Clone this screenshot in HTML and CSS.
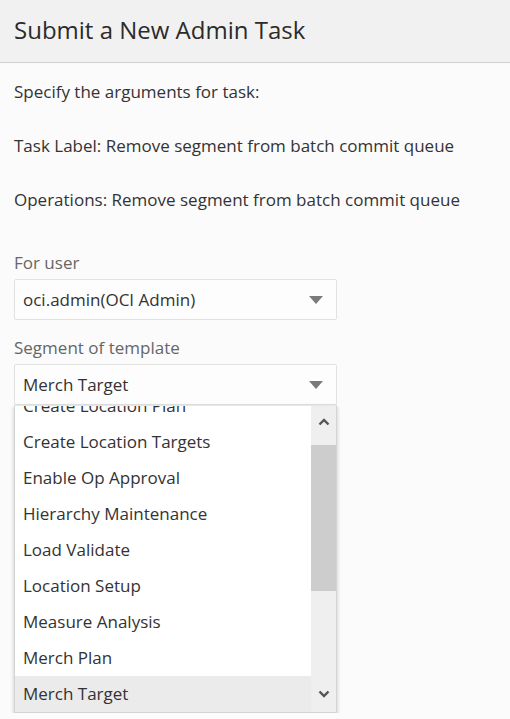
FILE: index.html
```html
<!DOCTYPE html>
<html lang="en">
<head>
<meta charset="utf-8">
<title>Submit a New Admin Task</title>
<link rel="stylesheet" href="styles.css">
</head>
<body>
<header class="page-header">
  <h1 class="title">Submit a New Admin Task</h1>
</header>
<main class="content">
  <p class="line">Specify the arguments for task:</p>
  <p class="line">Task Label: Remove segment from batch commit queue</p>
  <p class="line">Operations: Remove segment from batch commit queue</p>

  <div class="field">
    <label class="field-label">For user</label>
    <div class="select">
      <span class="select-value">oci.admin(OCI Admin)</span>
      <span class="caret"></span>
    </div>
  </div>

  <div class="field">
    <label class="field-label">Segment of template</label>
    <div class="select">
      <span class="select-value">Merch Target</span>
      <span class="caret"></span>
    </div>
    <div class="listbox">
      <ul class="options">
        <li class="option option-first">Create Location Plan</li>
        <li class="option">Create Location Targets</li>
        <li class="option">Enable Op Approval</li>
        <li class="option">Hierarchy Maintenance</li>
        <li class="option">Load Validate</li>
        <li class="option">Location Setup</li>
        <li class="option">Measure Analysis</li>
        <li class="option">Merch Plan</li>
        <li class="option option-selected">Merch Target</li>
      </ul>
      <div class="scrollbar">
        <div class="scroll-btn scroll-up">
          <svg width="12" height="8" viewBox="0 0 12 8"><polyline points="1.5,6.5 6,2 10.5,6.5" fill="none" stroke="#555" stroke-width="2.4"/></svg>
        </div>
        <div class="scroll-thumb"></div>
        <div class="scroll-track"></div>
        <div class="scroll-btn scroll-down">
          <svg width="12" height="8" viewBox="0 0 12 8"><polyline points="1.5,1.5 6,6 10.5,1.5" fill="none" stroke="#555" stroke-width="2.4"/></svg>
        </div>
      </div>
    </div>
  </div>
</main>
</body>
</html>
```
FILE: styles.css
```css
html, body {
  margin: 0;
  padding: 0;
}

body {
  background: #fbfbfb;
  color: #333333;
  font-family: "Open Sans", "Noto Sans", sans-serif;
  font-size: 17px;
}

.page-header {
  height: 62px;
  background: #f1f1f1;
  border-bottom: 1px solid #d0d0d0;
  display: flex;
  align-items: center;
  padding-left: 14px;
}

.title {
  margin: 0;
  font-size: 24px;
  font-weight: 400;
  color: #2b2b2b;
  line-height: 32px;
  padding-bottom: 2px;
}

.content {
  padding: 17px 14px 0 14px;
}

.line {
  margin: 0 0 30px 0;
  line-height: 24px;
}

.field {
  margin-top: 39px;
  width: 323px;
}

.field + .field {
  margin-top: 16px;
}

.field-label {
  display: block;
  color: #666666;
  line-height: 24px;
  margin-bottom: 4px;
}

.select {
  height: 41px;
  box-sizing: border-box;
  border: 1px solid #e2e2e2;
  border-radius: 2px;
  background: #fdfdfd;
  display: flex;
  align-items: center;
  justify-content: space-between;
  padding: 0 13px 0 8px;
}

.select-value {
  line-height: 24px;
}

.caret {
  width: 0;
  height: 0;
  border-left: 7px solid transparent;
  border-right: 7px solid transparent;
  border-top: 8px solid #7a7a7a;
}

/* open dropdown list under the second select */
.listbox {
  width: 323px;
  height: 308px;
  box-sizing: border-box;
  background: #ffffff;
  border: 1px solid #d4d4d4;
  border-top-color: #e6e6e6;
  box-shadow: 0 2px 4px rgba(0, 0, 0, 0.22);
  display: flex;
  overflow: hidden;
}

.options {
  list-style: none;
  margin: 0;
  padding: 0;
  flex: 1;
  overflow: hidden;
}

.option {
  height: 36px;
  line-height: 36px;
  padding-left: 8px;
  white-space: nowrap;
}

.option-first {
  margin-top: -18px;
}

.option-selected {
  background: #ebebeb;
}

.scrollbar {
  width: 25px;
  background: #efefef;
  display: flex;
  flex-direction: column;
}

.scroll-btn {
  display: flex;
  justify-content: center;
}

.scroll-up {
  height: 39px;
  padding-top: 12px;
  box-sizing: border-box;
}

.scroll-down {
  height: 36px;
  align-items: center;
}

.scroll-thumb {
  height: 146px;
  background: #cdcdcd;
}

.scroll-track {
  flex: 1;
}
```
